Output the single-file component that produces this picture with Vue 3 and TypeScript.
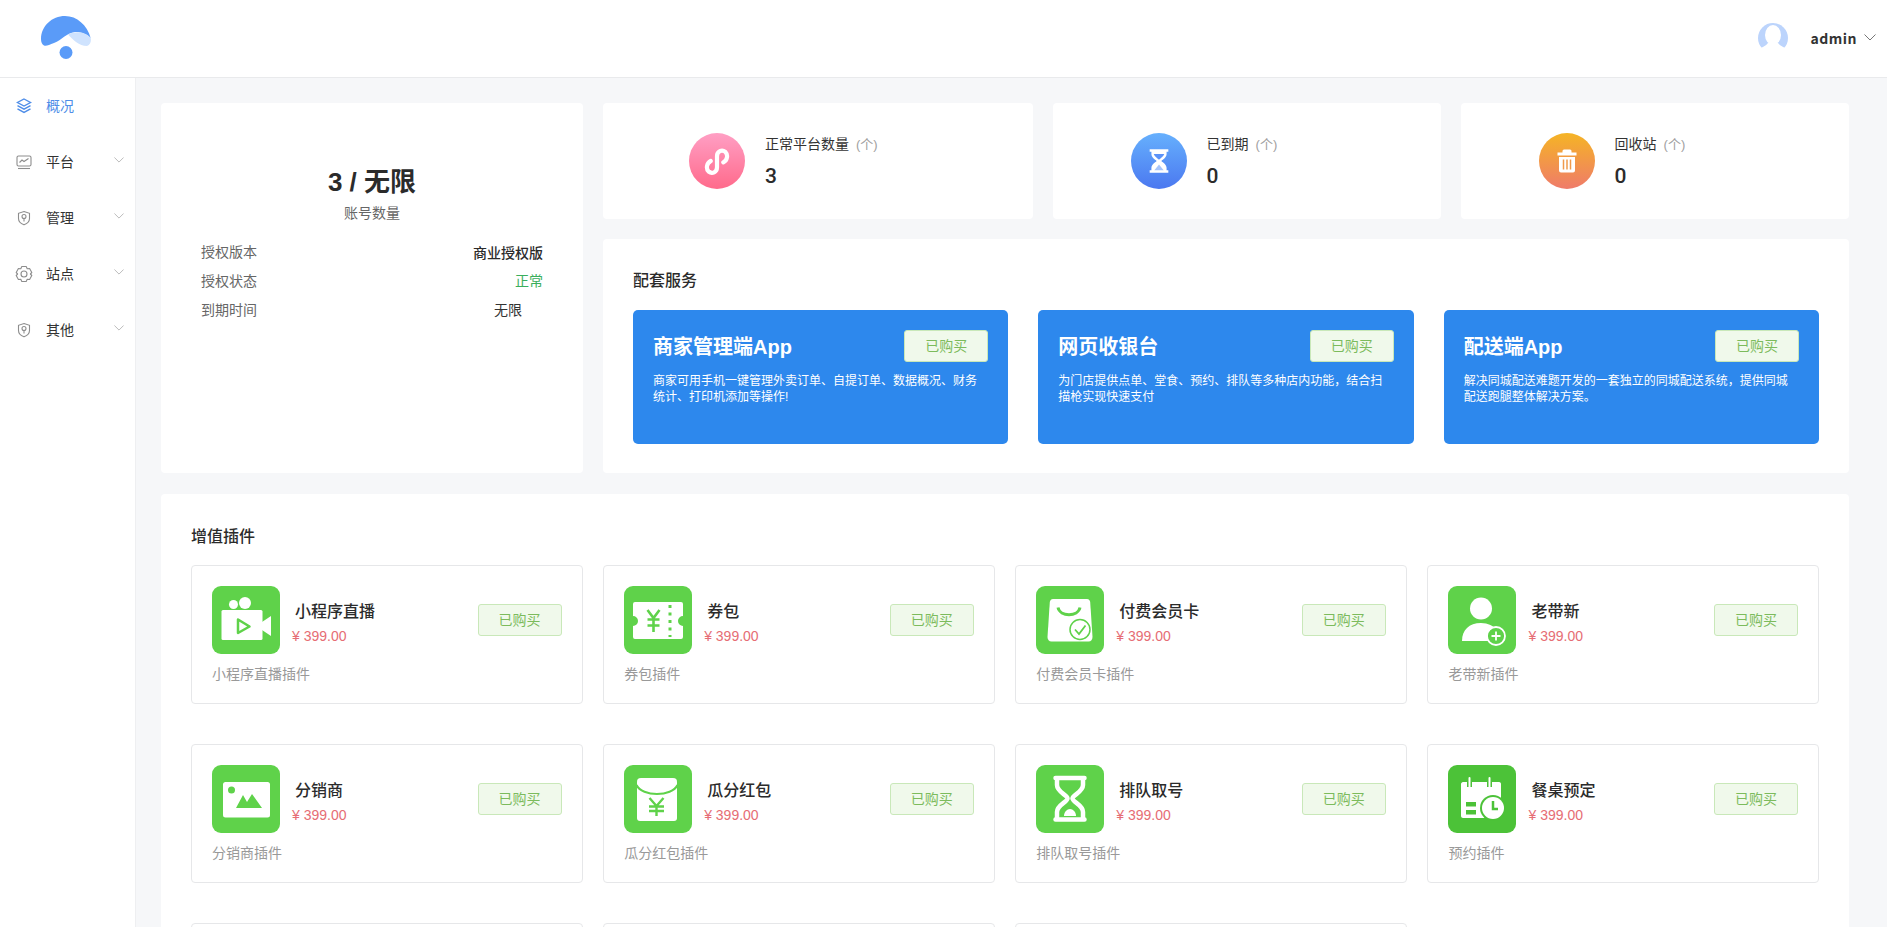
<script setup lang="ts">
const nav = [
  { label: '概况', icon: 'layers', active: true },
  { label: '平台', icon: 'chart' },
  { label: '管理', icon: 'shield' },
  { label: '站点', icon: 'gear' },
  { label: '其他', icon: 'shield' },
]
const stats = [
  { label: '正常平台数量', value: '3', tone: 'pink', icon: 'link' },
  { label: '已到期', value: '0', tone: 'blue', icon: 'glass' },
  { label: '回收站', value: '0', tone: 'orange', icon: 'trash' },
]
const services = [
  { title: '商家管理端App', desc: '商家可用手机一键管理外卖订单、自提订单、数据概况、财务统计、打印机添加等操作!' },
  { title: '网页收银台', desc: '为门店提供点单、堂食、预约、排队等多种店内功能\uFF0C结合扫描枪实现快速支付' },
  { title: '配送端App', desc: '解决同城配送难题开发的一套独立的同城配送系统\uFF0C提供同城配送跑腿整体解决方案。' },
]
const plugins = [
  { name: '小程序直播', desc: '小程序直播插件', icon: 'video' },
  { name: '券包', desc: '券包插件', icon: 'ticket' },
  { name: '付费会员卡', desc: '付费会员卡插件', icon: 'bag' },
  { name: '老带新', desc: '老带新插件', icon: 'person' },
  { name: '分销商', desc: '分销商插件', icon: 'image' },
  { name: '瓜分红包', desc: '瓜分红包插件', icon: 'packet' },
  { name: '排队取号', desc: '排队取号插件', icon: 'hourglass' },
  { name: '餐桌预定', desc: '预约插件', icon: 'calendar' },
]
</script>

<template>
  <div class="app">
    <header class="topbar">
      <svg class="logo" viewBox="41 16 50 44" width="50" height="44">
        <path d="M41 39C41 26 52 16 65 16C77 16 87 25 90.7 38C87 34 80 31.500 75 32C66 33 62 40 54 43C49 45 46 46.500 44 45.500C42 44.500 41 42 41 39Z" fill="#5a9bf8" />
        <path d="M68 34.500C76 30.500 86 32 90.700 38C91.300 41 90.500 45 87 46C79 46 73 40 68 34.500Z" fill="#cfe3fe" />
        <circle cx="66" cy="52.500" r="6.500" fill="#5a9bf8" />
      </svg>
      <div class="user">
        <svg class="avatar" viewBox="0 0 30 30" width="30" height="30">
          <circle cx="15" cy="15" r="15" fill="#bcd4fc" />
          <ellipse cx="15" cy="12" rx="8" ry="10" fill="#fff" />
          <path d="M0 30V27C4 24 8 23 10 20H20C22 23 26 24 30 27V30Z" fill="#fff" />
        </svg>
        <span class="username">admin</span>
        <svg class="chev" viewBox="0 0 12 7" width="12" height="7"><path d="M.5.5 6 6 11.500.5" /></svg>
      </div>
    </header>

    <div class="body">
      <aside class="side">
        <div v-for="item in nav" :key="item.label" class="nav-item" :class="{ active: item.active }">
          <svg class="nav-icon" viewBox="0 0 18 18" width="18" height="18">
            <g v-if="item.icon === 'layers'">
              <path d="M9 2 15.500 5.500 9 9 2.500 5.500Z" />
              <path d="M2.500 8.700 9 12.200 15.500 8.700" />
              <path d="M2.500 11.900 9 15.400 15.500 11.900" />
            </g>
            <g v-else-if="item.icon === 'chart'">
              <rect x="2" y="3" width="14" height="10" rx="1.500" />
              <path d="M4.500 9.500 7 7l2 1.500L13.500 5.500" />
              <path d="M3 15.500h12" />
            </g>
            <g v-else-if="item.icon === 'shield'">
              <path d="M9 2.500 14.500 4.300V9.500C14.500 12.500 12 14.700 9 15.800C6 14.700 3.500 12.500 3.500 9.500V4.300Z" />
              <circle cx="9" cy="7.500" r="2" />
              <path d="M9 9.500v3" />
            </g>
            <g v-else>
              <path d="M6.800 1.500H11.200L12.200 3.700 14.600 3.500 16.800 7.500 15.400 9 16.800 10.500 14.600 14.500 12.200 14.300 11.200 16.500H6.800L5.800 14.300 3.400 14.500 1.200 10.500 2.600 9 1.200 7.500 3.400 3.500 5.800 3.700Z" stroke-linejoin="round" />
              <circle cx="9" cy="9" r="3" />
            </g>
          </svg>
          <span class="nav-label">{{ item.label }}</span>
          <svg v-if="!item.active" class="nav-chev" viewBox="0 0 12 7" width="10" height="6"><path d="M.5.5 6 6 11.500.5" /></svg>
        </div>
      </aside>

      <main class="main">
        <div class="top">
          <section class="card account">
            <div class="account-num">3 / 无限</div>
            <div class="account-sub">账号数量</div>
            <div class="info-row"><span>授权版本</span><b class="val">商业授权版</b></div>
            <div class="info-row"><span>授权状态</span><span class="val ok">正常</span></div>
            <div class="info-row"><span>到期时间</span><span class="val mid">无限</span></div>
          </section>

          <div class="top-right">
            <div class="stats">
              <div v-for="s in stats" :key="s.label" class="card stat">
                <span class="stat-icon" :class="s.tone">
                  <svg v-if="s.icon === 'link'" viewBox="4 3.500 20 20" width="28" height="28">
                    <path class="link" d="M9.500 13.500C6.500 15 6 19 8 21C10.500 23 14 21.500 14 18V10C14 6.500 17.500 5 20 7C22 9 21.500 13 18.500 14.500" />
                  </svg>
                  <svg v-else-if="s.icon === 'glass'" viewBox="2 2 24 24" width="28" height="28">
                    <path class="solid" d="M6 4H22V6H20.500V8C20.500 11 17.500 12.500 16 14C17.500 15.500 20.500 17 20.500 20V22H22V24H6V22H7.500V20C7.500 17 10.500 15.500 12 14C10.500 12.500 7.500 11 7.500 8V6H6Z" />
                    <path d="M9.500 8H18.500C18 10 15 12 14 13C13 12 10 10 9.500 8Z" fill="#5c93f8" />
                    <path d="M14 17 18 22H10Z" fill="#5c93f8" opacity=".55" />
                  </svg>
                  <svg v-else viewBox="0 0 28 28" width="28" height="28">
                    <path class="solid" d="M11 2.500H17A1.500 1.500 0 0 1 18.500 4V5.500H23.500V8.500H4.500V5.500H9.500V4A1.500 1.500 0 0 1 11 2.500ZM6 10H22V23.500A2 2 0 0 1 20 25.500H8A2 2 0 0 1 6 23.500Z" />
                    <path d="M10.500 12.500V22.500M14 12.500V22.500M17.500 12.500V22.500" stroke="#f09a4b" stroke-width="1.500" fill="none" />
                  </svg>
                </span>
                <div>
                  <div class="stat-label">{{ s.label }}<em>(个)</em></div>
                  <div class="stat-value">{{ s.value }}</div>
                </div>
              </div>
            </div>

            <section class="card service">
              <h3 class="heading">配套服务</h3>
              <div class="service-grid">
                <article v-for="s in services" :key="s.title" class="service-item">
                  <div class="service-head">
                    <span class="service-title">{{ s.title }}</span>
                    <span class="buy">已购买</span>
                  </div>
                  <p class="service-desc">{{ s.desc }}</p>
                </article>
              </div>
            </section>
          </div>
        </div>

        <section class="card plugins">
          <h3 class="heading plugin-heading">增值插件</h3>
          <div class="plugin-grid">
            <article v-for="p in plugins" :key="p.name" class="plugin">
              <div class="plugin-top">
                <span class="plugin-icon" :class="{ dark: p.icon === 'calendar' }">
                  <svg viewBox="0 0 68 68" width="68" height="68">
                    <g v-if="p.icon === 'video'" fill="#fff">
                      <circle cx="21.500" cy="18.500" r="4.500" />
                      <circle cx="33" cy="17" r="6" />
                      <rect x="9.500" y="24" width="41" height="30" rx="1.500" />
                      <path d="M50 36 59 30V50L50 44Z" />
                      <path d="M26 33.500 37.500 40.500 26 47Z" fill="none" stroke="#5fd24a" stroke-width="2.500" stroke-linejoin="round" />
                    </g>
                    <g v-else-if="p.icon === 'ticket'">
                      <path d="M11 16H57A2 2 0 0 1 59 18V30A5 5 0 0 0 59 40V51A2 2 0 0 1 57 53H11A2 2 0 0 1 9 51V40A5 5 0 0 0 9 30V18A2 2 0 0 1 11 16Z" fill="#fff" />
                      <path d="M23.500 24 29.500 32 35.500 24M29.500 32V46M23.500 33.500H35.500M23.500 39.500H35.500" fill="none" stroke="#5fd24a" stroke-width="2.600" />
                      <path d="M46 19V51" fill="none" stroke="#5fd24a" stroke-width="3" stroke-dasharray="3 4.500" />
                    </g>
                    <g v-else-if="p.icon === 'bag'">
                      <path d="M17 13H51C53 13 54 14.500 54.200 16L56.500 51C56.500 53.500 55 55.500 52.500 55.500H15.500C13 55.500 11.500 53.500 11.500 51L13.800 16C14 14.500 15 13 17 13Z" fill="#fff" />
                      <path d="M22 21.500C24 31 42 31 44 21.500" fill="none" stroke="#5fd24a" stroke-width="3" />
                      <circle cx="44" cy="43.500" r="10" fill="#fff" stroke="#5fd24a" stroke-width="1.500" />
                      <path d="M39 43.500 43 48 49.500 39.500" fill="none" stroke="#5fd24a" stroke-width="1.800" />
                    </g>
                    <g v-else-if="p.icon === 'person'">
                      <ellipse cx="33" cy="22.500" rx="11" ry="11" fill="#fff" />
                      <path d="M14 55C14 44 21 37 33 37C40 37 46 40 48 44V55Z" fill="#fff" />
                      <circle cx="48" cy="50" r="9" fill="#5fd24a" stroke="#fff" stroke-width="1.800" />
                      <path d="M48 45.500V54.500M43.500 50H52.500" stroke="#fff" stroke-width="1.800" />
                    </g>
                    <g v-else-if="p.icon === 'image'">
                      <rect x="11" y="17" width="47" height="35.500" rx="2.500" fill="#fff" />
                      <circle cx="19.500" cy="25" r="3.500" fill="#5fd24a" />
                      <path d="M24 43 31 30 35 37 40 29 50 43Z" fill="#5fd24a" />
                    </g>
                    <g v-else-if="p.icon === 'packet'">
                      <path d="M17 13H49C52 13 53 14.500 53 17V53C53 55 52 56 50 56H16C14 56 13 55 13 53V17C13 14.500 14 13 17 13Z" fill="#fff" />
                      <path d="M12.500 20C18 32 48 32 53.500 20" fill="none" stroke="#5fd24a" stroke-width="2" />
                      <path d="M25.500 33 32.500 41 39.500 33M32.500 41V51M25 41.500H40M25 46H40" fill="none" stroke="#5fd24a" stroke-width="2.400" />
                    </g>
                    <g v-else-if="p.icon === 'hourglass'" fill="none" stroke="#fff">
                      <path d="M19.500 13H48.500M19.500 54.500H48.500" stroke-width="4.500" stroke-linecap="round" />
                      <path d="M21 13V20C21 27 31.500 30 31.500 33.500C31.500 37 21 40 21 47V54.500M47 13V20C47 27 36.500 30 36.500 33.500C36.500 37 47 40 47 47V54.500" stroke-width="4.500" />
                      <path d="M28 51C28 47 31 44 34 44C37 44 40 47 40 51Z" fill="#fff" stroke="none" />
                    </g>
                    <g v-else>
                      <path d="M15 17H51C52.500 17 53 18 53 19V53H15C14 53 13 52 13 51V19C13 18 14 17 15 17Z" fill="#fff" />
                      <path d="M21.500 13V22M41.500 13V22" stroke="#4cc238" stroke-width="5" />
                      <path d="M21.500 13V22M41.500 13V22" stroke="#fff" stroke-width="2" stroke-linecap="round" />
                      <path d="M18 37H28V41.500H18ZM18 45H28V49.500H18Z" fill="#4cc238" />
                      <circle cx="45" cy="43" r="13" fill="#4cc238" />
                      <circle cx="45" cy="43" r="11" fill="#fff" />
                      <path d="M45 36V44H50" fill="none" stroke="#4cc238" stroke-width="2.500" />
                    </g>
                  </svg>
                </span>
                <div class="plugin-info">
                  <div class="plugin-name">{{ p.name }}</div>
                  <div class="plugin-price">¥ 399.00</div>
                </div>
                <span class="buy">已购买</span>
              </div>
              <div class="plugin-desc">{{ p.desc }}</div>
            </article>
            <article v-for="n in 3" :key="n" class="plugin"></article>
          </div>
        </section>
      </main>
    </div>
  </div>
</template>

<style>
html, body { margin: 0; background: #f6f7f9; }
</style>

<style scoped>
.app {
  display: flex;
  flex-direction: column;
  height: 100vh;
  overflow: hidden;
  color: #333;
  font: 14px/20px "Liberation Sans", "Noto Sans CJK SC", sans-serif;
}
.topbar {
  flex: none;
  height: 77px;
  display: flex;
  align-items: center;
  justify-content: space-between;
  padding: 0 11px 0 41px;
  background: #fff;
  border-bottom: 1px solid #e9eaec;
}
.logo { display: block; margin-top: -1px; }
.user { display: flex; align-items: center; margin-top: -2px; }
.avatar { display: block; }
.username {
  margin-left: 22px;
  font: 700 14px/20px "Noto Sans CJK SC", sans-serif;
  letter-spacing: .5px;
  color: #333;
}
.chev { margin-left: 7px; fill: none; stroke: #777; stroke-width: 1; }
.body { flex: 1; display: flex; min-height: 0; }
.side {
  flex: none;
  width: 135px;
  background: #fff;
  border-right: 1px solid #eeeff1;
}
.nav-item {
  display: flex;
  align-items: center;
  height: 56px;
  padding: 0 11px 0 15px;
}
.nav-icon { flex: none; fill: none; stroke: #8d8d8d; stroke-width: 1.100; }
.nav-label { margin-left: 13px; color: #333; }
.nav-chev { margin: -5px 0 0 auto; fill: none; stroke: #bcbcbc; stroke-width: 1.200; }
.nav-item.active .nav-icon { stroke: #4e8de8; stroke-width: 1.400; }
.nav-item.active .nav-label { color: #4e8de8; }
.main {
  flex: 1;
  min-width: 0;
  padding: 25px 38px 0 25px;
  overflow: hidden;
}
.card { background: #fff; border-radius: 4px; }
.top {
  display: grid;
  grid-template-columns: 422px 1fr;
  gap: 20px;
}
.account { padding: 60px 40px 0; }
.account-num {
  font-size: 26px;
  line-height: 38px;
  font-weight: 700;
  text-align: center;
  color: #2b2b2b;
}
.account-sub { margin: 2px 0 15px; text-align: center; color: #666; }
.info-row {
  display: flex;
  justify-content: space-between;
  line-height: 29px;
  color: #666;
}
.val { width: 70px; text-align: right; color: #333; }
b.val { font-weight: 500; color: #2b2b2b; font-family: "Noto Sans CJK SC", sans-serif; }
.ok { color: #3aae5c; }
.mid { text-align: center; }
.top-right { display: flex; flex-direction: column; gap: 20px; min-width: 0; }
.stats {
  display: grid;
  grid-template-columns: 430px 1fr 1fr;
  gap: 20px;
}
.stat {
  display: flex;
  align-items: center;
  height: 116px;
  padding-left: 20%;
  box-sizing: border-box;
}
.stat-icon {
  flex: none;
  display: flex;
  align-items: center;
  justify-content: center;
  width: 56px;
  height: 56px;
  margin-right: 20px;
  border-radius: 50%;
}
.pink { background: linear-gradient(#ff9fc4, #ff6a8b); }
.blue { background: linear-gradient(#66b0fd, #4b78f0); }
.orange { background: linear-gradient(#f5b425, #ef7b6a); }
.link { fill: none; stroke: #fff; stroke-width: 3; stroke-linecap: round; }
.solid { fill: #fff; }
.stat-label { line-height: 20px; color: #333; }
.stat-label em {
  margin-left: 7px;
  font-style: normal;
  font-size: 13px;
  color: #a0a0a0;
}
.stat-value {
  margin-top: 9px;
  font-size: 21px;
  line-height: 24px;
  font-weight: 500;
  color: #2b2b2b;
  font-family: "Roboto", sans-serif;
}
.service { height: 234px; padding: 30px; box-sizing: border-box; }
.heading {
  margin: -1px 0 20px;
  font: 500 16px/22px "Noto Sans CJK SC", sans-serif;
  color: #2b2b2b;
}
.service-grid {
  display: grid;
  grid-template-columns: repeat(3, 1fr);
  gap: 30px;
}
.service-item {
  height: 134px;
  padding: 20px;
  box-sizing: border-box;
  background: #2d88ed;
  border-radius: 5px;
  color: #fff;
}
.service-head { display: flex; align-items: center; justify-content: space-between; }
.service-title { padding-top: 2px; font-size: 20px; line-height: 30px; font-weight: 700; }
.service-desc { margin: 11px 0 0; font-size: 12px; line-height: 16px; }
.buy {
  flex: none;
  display: flex;
  align-items: center;
  justify-content: center;
  width: 84px;
  height: 32px;
  box-sizing: border-box;
  background: #f0f9eb;
  border: 1px solid #c9e8b9;
  border-radius: 3px;
  color: #7cbb5c;
}
.plugins { margin-top: 21px; padding: 30px; }
.plugin-heading { line-height: 24px; margin-bottom: 18px; }
.plugin-grid {
  display: grid;
  grid-template-columns: repeat(4, 1fr);
  gap: 40px 20.67px;
}
.plugin {
  height: 139px;
  padding: 20px;
  box-sizing: border-box;
  border: 1px solid #e6e7e9;
  border-radius: 4px;
}
.plugin-top { display: flex; align-items: center; }
.plugin-icon {
  flex: none;
  display: block;
  width: 68px;
  height: 68px;
  overflow: hidden;
  border-radius: 9px;
  background: #5fd24a;
}
.plugin-icon svg { display: block; }
.plugin-icon.dark { background: #4cc238; }
.plugin-info { flex: 1; margin-left: 12px; align-self: flex-start; padding-top: 12px; }
.plugin-name {
  padding-left: 3px;
  font: 500 16px/24px "Noto Sans CJK SC", sans-serif;
  color: #2b2b2b;
}
.plugin-price { margin-top: 2px; line-height: 24px; color: #e66d74; }
.plugin-desc { margin-top: 10px; color: #999; }
</style>
